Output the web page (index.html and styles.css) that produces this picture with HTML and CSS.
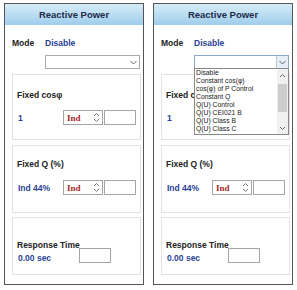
FILE: index.html
```html
<!DOCTYPE html>
<html lang="en">
<head>
    <meta charset="UTF-8">
    <title>Reactive Power</title>
    <link rel="stylesheet" href="styles.css">
</head>
<body>
    <div id="wrap">
        <section class="panel">
            <div class="panel_head">Reactive Power</div>
            <div class="mode_row">
                <span class="mode_label">Mode</span>
                <span class="value">Disable</span>
            </div>
            <div class="select">
                <span class="select_btn">
                    <svg width="7" height="5" viewBox="0 0 7 5"><polyline points="0.5,1 3.5,4 6.5,1" fill="none" stroke="#666" stroke-width="1"/></svg>
                </span>
            </div>

            <div class="box box_cos">
                <p class="box_title">Fixed cosφ</p>
                <div class="row">
                    <span class="row_label value">1</span>
                    <div class="spin">
                        <span class="spin_text">Ind</span>
                        <svg class="spin_arrows" width="7" height="11" viewBox="0 0 7 11"><polyline points="1,4 3.5,1.5 6,4" fill="none" stroke="#777" stroke-width="1"/><polyline points="1,7 3.5,9.5 6,7" fill="none" stroke="#777" stroke-width="1"/></svg>
                    </div>
                    <div class="field"></div>
                </div>
            </div>

            <div class="box box_q">
                <p class="box_title">Fixed Q (%)</p>
                <div class="row">
                    <span class="row_label value">Ind 44%</span>
                    <div class="spin">
                        <span class="spin_text">Ind</span>
                        <svg class="spin_arrows" width="7" height="11" viewBox="0 0 7 11"><polyline points="1,4 3.5,1.5 6,4" fill="none" stroke="#777" stroke-width="1"/><polyline points="1,7 3.5,9.5 6,7" fill="none" stroke="#777" stroke-width="1"/></svg>
                    </div>
                    <div class="field"></div>
                </div>
            </div>

            <div class="box box_time">
                <p class="box_title">Response Time</p>
                <div class="row row_time">
                    <span class="row_label value">0.00 sec</span>
                    <div class="field"></div>
                </div>
            </div>
        </section>

        <section class="panel">
            <div class="panel_head">Reactive Power</div>
            <div class="mode_row">
                <span class="mode_label">Mode</span>
                <span class="value">Disable</span>
            </div>
            <div class="select open">
                <span class="select_btn">
                    <svg width="7" height="5" viewBox="0 0 7 5"><polyline points="0.5,1 3.5,4 6.5,1" fill="none" stroke="#666" stroke-width="1"/></svg>
                </span>
                <div class="dropdown">
                    <ul class="options">
                        <li>Disable</li>
                        <li>Constant cos(φ)</li>
                        <li>cos(φ) of P Control</li>
                        <li>Constant Q</li>
                        <li>Q(U) Control</li>
                        <li>Q(U) CEI021 B</li>
                        <li>Q(U) Class B</li>
                        <li>Q(U) Class C</li>
                    </ul>
                    <div class="scrollbar">
                        <svg width="7" height="5" viewBox="0 0 7 5"><polyline points="1,4 3.5,1.5 6,4" fill="none" stroke="#666" stroke-width="1"/></svg>
                        <div class="thumb"></div>
                        <svg width="7" height="5" viewBox="0 0 7 5"><polyline points="1,1 3.5,3.5 6,1" fill="none" stroke="#666" stroke-width="1"/></svg>
                    </div>
                </div>
            </div>

            <div class="box box_cos">
                <p class="box_title covered">Fixed c</p>
                <div class="row">
                    <span class="row_label value">1</span>
                </div>
            </div>

            <div class="box box_q">
                <p class="box_title">Fixed Q (%)</p>
                <div class="row">
                    <span class="row_label value">Ind 44%</span>
                    <div class="spin">
                        <span class="spin_text">Ind</span>
                        <svg class="spin_arrows" width="7" height="11" viewBox="0 0 7 11"><polyline points="1,4 3.5,1.5 6,4" fill="none" stroke="#777" stroke-width="1"/><polyline points="1,7 3.5,9.5 6,7" fill="none" stroke="#777" stroke-width="1"/></svg>
                    </div>
                    <div class="field"></div>
                </div>
            </div>

            <div class="box box_time">
                <p class="box_title">Response Time</p>
                <div class="row row_time">
                    <span class="row_label value">0.00 sec</span>
                    <div class="field"></div>
                </div>
            </div>
        </section>
    </div>
</body>
</html>
```

FILE: styles.css
```css
* {
    margin: 0;
    padding: 0;
    box-sizing: border-box;
}

html, body {
    background-color: #fff;
    color: #222;
    font-family: 'Liberation Sans', Arial, sans-serif;
}

ul {
    list-style: none;
}

#wrap {
    display: flex;
    gap: 9px;
    padding: 3px 0 0 4px;
}

.panel {
    width: 140px;
    height: 282px;
    border: 1px solid #555;
}

.panel_head {
    height: 21px;
    line-height: 21px;
    text-align: center;
    font-size: 9.5px;
    font-weight: bold;
    color: #1c2b4a;
    background: linear-gradient(#d6ecf9, #9fcdec);
}

.value {
    color: #2b3f96;
    font-weight: bold;
}

.mode_row {
    display: flex;
    height: 12px;
    line-height: 12px;
    margin-top: 12px;
    padding-left: 7px;
    font-size: 8.5px;
}

.mode_label {
    width: 33px;
    font-weight: bold;
}

.select {
    position: relative;
    width: 95px;
    height: 14px;
    margin: 6px 0 0 40px;
    border: 1px solid #aaa;
    display: flex;
    justify-content: flex-end;
}

.select_btn {
    width: 12px;
    display: flex;
    align-items: center;
    justify-content: center;
}

.select.open {
    border-color: #8aa9c8;
}

.select.open .select_btn {
    background-color: #e6eef6;
    border-left: 1px solid #b7c9db;
}

/* 펼쳐진 목록 */
.dropdown {
    position: absolute;
    top: 12px;
    left: -1px;
    width: 95px;
    height: 67px;
    background-color: #fff;
    border: 1px solid #888;
    display: flex;
    z-index: 2;
}

.options {
    flex: 1;
    font-size: 6.8px;
    color: #222;
    padding-left: 1px;
}

.options li {
    height: 8px;
    line-height: 8px;
    white-space: nowrap;
}

.scrollbar {
    width: 11px;
    background-color: #f0f0f0;
    display: flex;
    flex-direction: column;
    align-items: center;
    padding: 4px 0 3px;
}

.thumb {
    width: 9px;
    height: 28px;
    margin: 6px 0 auto;
    background-color: #cdcdcd;
}

.box {
    width: 129px;
    margin-left: 7px;
    border: 1px solid #e2e2e2;
    padding-left: 4px;
}

.box_cos {
    height: 66px;
    margin-top: 5px;
    padding-top: 14px;
}

.box_q {
    height: 68px;
    margin-top: 5px;
    padding-top: 12px;
}

.box_time {
    height: 58px;
    margin-top: 4px;
    padding-top: 21px;
}

.box_title {
    height: 12px;
    line-height: 12px;
    font-size: 8.5px;
    font-weight: bold;
}

/* 목록 밑에 가려진 제목 */
.covered {
    width: 28px;
    overflow: hidden;
    white-space: nowrap;
}

.row {
    display: flex;
    align-items: center;
    height: 15px;
    margin-top: 9px;
    font-size: 8.5px;
}

.box_q .row {
    margin-top: 10px;
}

.row_label {
    width: 46px;
    padding-left: 1px;
}

.row_time {
    align-items: flex-end;
    margin-top: -3px;
}

.row_time .row_label {
    width: 61px;
    line-height: 10px;
}

.spin {
    width: 40px;
    height: 15px;
    border: 1px solid #a5a5a5;
    display: flex;
    align-items: center;
    justify-content: space-between;
    padding: 0 2px 0 3px;
}

.spin_text {
    color: #a3282a;
    font-weight: bold;
    font-family: 'Liberation Serif', 'Times New Roman', serif;
    font-size: 9px;
}

.field {
    width: 32px;
    height: 15px;
    margin-left: 1px;
    border: 1px solid #a5a5a5;
}
```
